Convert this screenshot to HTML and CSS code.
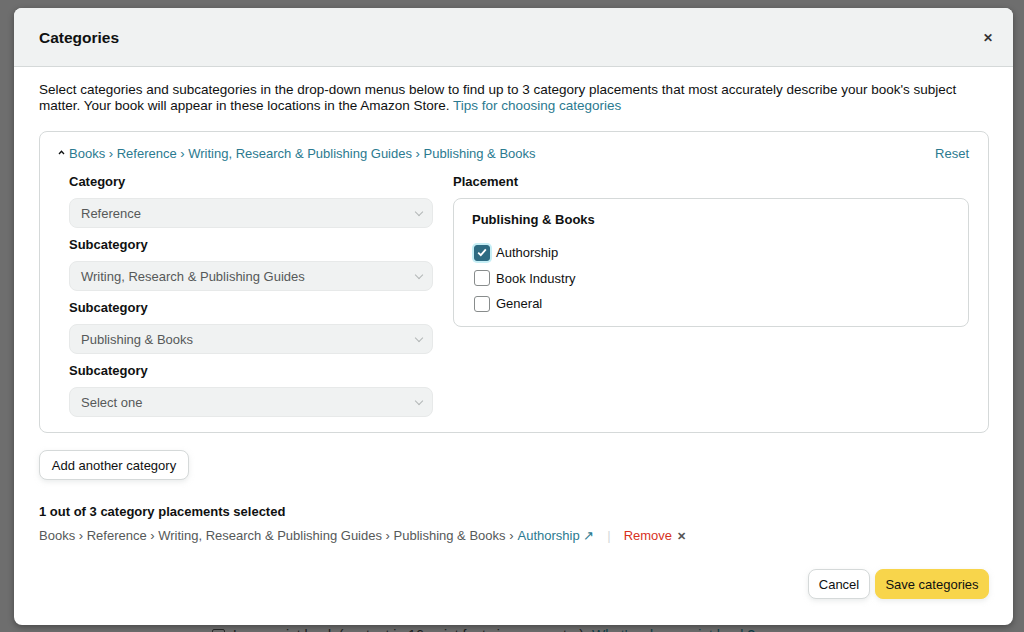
FILE: index.html
```html
<!DOCTYPE html>
<html>
<head>
    <meta charset="utf-8">
    <title>Categories</title>
    <link rel="stylesheet" href="styles.css">
</head>
<body>
    <div class="page">
        <div class="page-line">
            <span class="page-check"></span>
            Large-print book (content in 16-point font size or greater) <a class="page-link">What's a large-print book?</a>
        </div>
    </div>

    <div class="modal">
        <div class="modal-header">
            <h1 class="modal-title">Categories</h1>
            <span class="modal-close">&#x2715;</span>
        </div>

        <div class="modal-body">
            <p class="intro">Select categories and subcategories in the drop-down menus below to find up to 3 category placements that most accurately describe your book's subject matter. Your book will appear in these locations in the Amazon Store. <a class="link">Tips for choosing categories</a></p>

            <div class="card">
                <div class="card-top">
                    <a class="link crumbs">
                        <svg class="caret" width="7" height="5" viewBox="0 0 7 5"><path d="M1 4 L3.5 1.3 L6 4" fill="none" stroke="#0f1111" stroke-width="1.3"/></svg>
                        Books › Reference › Writing, Research &amp; Publishing Guides › Publishing &amp; Books
                    </a>
                    <a class="link">Reset</a>
                </div>

                <div class="card-cols">
                    <div class="col-left">
                        <div class="label">Category</div>
                        <div class="select">Reference<span class="chev"></span></div>
                        <div class="label">Subcategory</div>
                        <div class="select">Writing, Research &amp; Publishing Guides<span class="chev"></span></div>
                        <div class="label">Subcategory</div>
                        <div class="select">Publishing &amp; Books<span class="chev"></span></div>
                        <div class="label">Subcategory</div>
                        <div class="select">Select one<span class="chev"></span></div>
                    </div>

                    <div class="col-right">
                        <div class="label">Placement</div>
                        <div class="placement">
                            <div class="placement-title">Publishing &amp; Books</div>
                            <label class="check-row"><span class="box checked">
                                <svg width="10" height="9" viewBox="0 0 10 9"><path d="M1.2 4.6 L3.8 7.2 L8.8 1.4" fill="none" stroke="#fff" stroke-width="1.8"/></svg>
                            </span>Authorship</label>
                            <label class="check-row"><span class="box"></span>Book Industry</label>
                            <label class="check-row"><span class="box"></span>General</label>
                        </div>
                    </div>
                </div>
            </div>

            <button class="btn btn-add">Add another category</button>

            <div class="summary-title">1 out of 3 category placements selected</div>
            <div class="summary-path">
                Books › Reference › Writing, Research &amp; Publishing Guides › Publishing &amp; Books ›
                <a class="link">Authorship ↗</a>
                <span class="sep">|</span>
                <a class="remove">Remove</a>
                <span class="remove-x">&#x2715;</span>
            </div>
        </div>

        <div class="modal-footer">
            <button class="btn btn-cancel">Cancel</button>
            <button class="btn btn-primary">Save categories</button>
        </div>
    </div>
</body>
</html>
```

FILE: styles.css
```css
* {
    margin: 0;
    padding: 0;
    box-sizing: border-box;
}

body {
    background: #6e6e6e;
    font-family: "Liberation Sans", Arial, sans-serif;
    font-size: 13px;
    color: #0f1111;
    height: 632px;
    overflow: hidden;
}

/* page behind the dialog */
.page {
    padding: 627px 0 0 212px;
}

.page-line {
    display: flex;
    align-items: center;
    gap: 8px;
    font-size: 14px;
    line-height: 16px;
    color: #1d1d1d;
}

.page-check {
    width: 13px;
    height: 13px;
    border: 1px solid #2a2a2a;
    border-radius: 2px;
}

.page-link {
    color: #0f3d47;
}

/* dialog */
.modal {
    position: absolute;
    top: 8px;
    left: 14px;
    width: 999px;
    height: 617px;
    background: #fff;
    border-radius: 8px;
    box-shadow: 0 2px 6px rgba(0, 0, 0, 0.35);
    display: flex;
    flex-direction: column;
    overflow: hidden;
}

.modal-header {
    height: 59px;
    background: #f0f2f2;
    border-bottom: 1px solid #d5d9d9;
    padding: 2px 20px 0 25px;
    display: flex;
    align-items: center;
    justify-content: space-between;
}

.modal-title {
    font-size: 15.5px;
    font-weight: bold;
}

.modal-close {
    font-size: 12px;
    font-weight: bold;
    color: #333;
}

.modal-body {
    padding: 15px 24px 0 25px;
    flex: 1;
}

.intro {
    font-size: 13.5px;
    line-height: 16px;
}

.link {
    color: #2b7a90;
    text-decoration: none;
}

.card {
    margin-top: 17px;
    border: 1px solid #d5d9d9;
    border-radius: 8px;
    padding: 13px 19px 15px 18px;
}

.card-top {
    display: flex;
    justify-content: space-between;
    line-height: 18px;
}

.crumbs {
    display: flex;
    align-items: center;
    gap: 4px;
}

.caret {
    margin-top: -3px;
}

.card-cols {
    display: grid;
    grid-template-columns: 364px 1fr;
    gap: 20px;
    margin-top: 10px;
    padding-left: 11px;
}

.label {
    font-weight: bold;
    line-height: 18px;
    margin-bottom: 7px;
}

.select {
    height: 30px;
    background: #f0f2f2;
    border: 1px solid #e7e9e9;
    border-radius: 8px;
    padding: 0 10px 0 11px;
    display: flex;
    align-items: center;
    justify-content: space-between;
    color: #565959;
    margin-bottom: 8px;
}

.select:last-child {
    margin-bottom: 0;
}

.chev {
    width: 6px;
    height: 6px;
    border-right: 1.5px solid #b3b7b7;
    border-bottom: 1.5px solid #b3b7b7;
    transform: rotate(45deg);
    margin-top: -3px;
}

.placement {
    border: 1px solid #d5d9d9;
    border-radius: 8px;
    height: 129px;
    padding: 12px 18px;
}

.placement-title {
    font-weight: bold;
    line-height: 18px;
    margin-bottom: 11px;
}

.check-row {
    display: flex;
    align-items: center;
    gap: 6px;
    height: 25.5px;
    padding-left: 2px;
}

.box {
    width: 16px;
    height: 16px;
    border: 1px solid #888c8c;
    border-radius: 3px;
    background: #fff;
    display: flex;
    align-items: center;
    justify-content: center;
}

.box.checked {
    background: #2e6b82;
    border-color: #2e6b82;
    box-shadow: 0 0 0 2px #c6eef5;
}

.btn {
    font-family: inherit;
    font-size: 13px;
    color: #0f1111;
    background: #fff;
    border: 1px solid #d5d9d9;
    border-radius: 8px;
    height: 30px;
    padding: 0 11px;
    white-space: nowrap;
    box-shadow: 0 2px 5px rgba(213, 217, 217, 0.5);
}

.btn-add {
    margin-top: 17px;
    width: 150px;
    padding: 0;
}

.summary-title {
    margin-top: 23px;
    font-weight: bold;
    line-height: 18px;
}

.summary-path {
    margin-top: 6px;
    line-height: 18px;
    color: #565959;
    display: flex;
    align-items: center;
    gap: 4px;
}

.sep {
    color: #d5d9d9;
    margin: 0 9px;
}

.remove {
    color: #d8311d;
}

.remove-x {
    font-size: 11px;
    font-weight: bold;
    color: #555;
    margin-left: 1px;
}

.modal-footer {
    display: flex;
    justify-content: flex-end;
    gap: 5px;
    padding: 0 24px 26px 0;
}

.btn-cancel {
    width: 62px;
    padding: 0;
}

.btn-primary {
    background: #f8d54b;
    border-color: #f8d54b;
    width: 114px;
    padding: 0;
}
```
